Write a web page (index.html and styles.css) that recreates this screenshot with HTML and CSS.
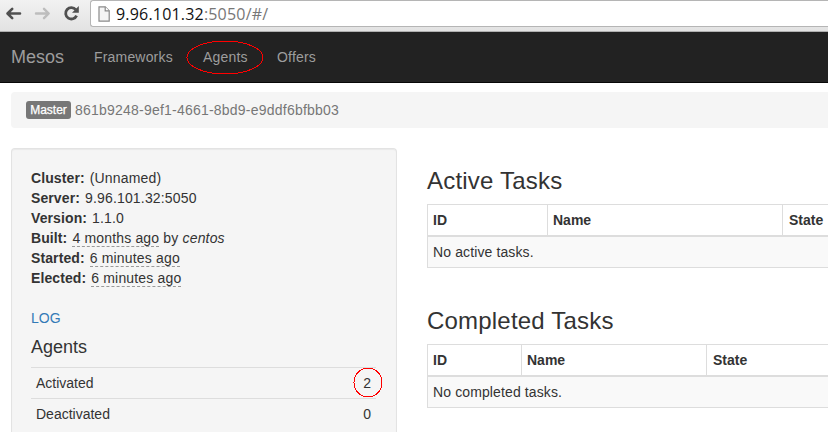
FILE: index.html
```
<!DOCTYPE html>
<html lang="en">
<head>
<meta charset="utf-8">
<title>Mesos</title>
<link rel="stylesheet" href="styles.css">
</head>
<body>
<div class="browser">
  <svg class="controls" width="90" height="30" viewBox="0 0 90 30" fill="none">
    <path d="M8 13.5H20M12.2 8.8L7.5 13.5L12.2 18.2" stroke="#505050" stroke-width="2.6" stroke-linecap="round" stroke-linejoin="round"/>
    <path d="M36 13.5H48.5M44 8.8L48.7 13.5L44 18.2" stroke="#bdbdbd" stroke-width="2.4" stroke-linecap="round" stroke-linejoin="round"/>
    <path d="M75.8 9.7A5.7 5.7 0 1 0 76.6 15.6" stroke="#505050" stroke-width="2.8"/>
    <path d="M78.8 6V12.8H72Z" fill="#505050"/>
  </svg>
  <div class="address">
    <svg class="page-icon" width="12" height="16" viewBox="0 0 12 16">
      <path d="M1 .8H7.2L11.2 4.8V15.2H1Z" fill="#f5f5f5" stroke="#8a8a8a" stroke-width="1.2"/>
      <path d="M7.2 .8V4.8H11.2" fill="#fff" stroke="#8a8a8a" stroke-width="1.2"/>
    </svg>
    <span class="url">9.96.101.32<span class="path">:5050/#/</span></span>
  </div>
</div>
<nav class="navbar">
  <a class="brand">Mesos</a>
  <a class="link frameworks">Frameworks</a>
  <a class="link agents">Agents
    <svg class="mark" width="78" height="35" viewBox="0 0 78 35" shape-rendering="crispEdges"><ellipse cx="39" cy="17.5" rx="38" ry="16.5"/></svg>
  </a>
  <a class="link offers">Offers</a>
</nav>
<div class="breadcrumb"><span class="label">Master</span><span class="master-id">861b9248-9ef1-4661-8bd9-e9ddf6bfbb03</span></div>
<main class="content">
  <aside class="well">
    <dl class="info">
      <div><dt>Cluster:</dt><dd>(Unnamed)</dd></div>
      <div><dt>Server:</dt><dd>9.96.101.32:5050</dd></div>
      <div><dt>Version:</dt><dd>1.1.0</dd></div>
      <div><dt>Built:</dt><dd><time>4 months ago</time> by <i>centos</i></dd></div>
      <div><dt>Started:</dt><dd><time>6 minutes ago</time></dd></div>
      <div><dt>Elected:</dt><dd><time>6 minutes ago</time></dd></div>
    </dl>
    <a class="log">LOG</a>
    <h4>Agents</h4>
    <div class="stat"><span>Activated</span><span class="num">2
      <svg class="mark" width="30" height="31" viewBox="0 0 30 31" shape-rendering="crispEdges"><ellipse cx="15" cy="15.5" rx="14" ry="14.5"/></svg></span></div>
    <div class="stat"><span>Deactivated</span><span class="num">0</span></div>
  </aside>
  <section class="tasks">
    <h3 class="h-active">Active Tasks</h3>
    <div class="table active">
      <div class="head"><b>ID</b><b>Name</b><b>State</b></div>
      <div class="empty">No active tasks.</div>
    </div>
    <h3 class="h-completed">Completed Tasks</h3>
    <div class="table completed">
      <div class="head"><b>ID</b><b>Name</b><b>State</b></div>
      <div class="empty">No completed tasks.</div>
    </div>
  </section>
</main>
</body>
</html>
```
FILE: styles.css
```
* { box-sizing: border-box; }
body {
  margin: 0;
  background: #fff;
  color: #333;
  font: 14px/20px "Liberation Sans", Arial, sans-serif;
}
.browser {
  display: flex;
  height: 32px;
  background: linear-gradient(#f2f2f2, #e2e2e2);
  border-bottom: 1px solid #b0b0b0;
}
.controls { flex: none; }
.address {
  display: flex;
  flex: 1;
  height: 27px;
  padding: 0 7px;
  background: #fff;
  border: 1px solid #b5b5b5;
  border-right: 0;
  border-radius: 3px 0 0 3px;
}
.page-icon { margin: 5px 6px 0 0; }
.url {
  color: #111;
  font: 16px/26px "Open Sans", "Noto Sans", sans-serif;
  letter-spacing: .19px;
}
.path { color: #777; }
.navbar {
  display: flex;
  height: 51px;
  padding: 15px 11px 0;
  background: #222;
  border-bottom: 1px solid #080808;
  color: #9d9d9d;
}
.brand { width: 83px; font-size: 18px; }
.link { position: relative; letter-spacing: .18px; }
.frameworks { width: 109px; }
.agents { width: 74px; }
.mark {
  position: absolute;
  fill: none;
  stroke: #f00;
  stroke-width: 1;
}
.agents .mark { left: -17px; top: -7px; }
.breadcrumb {
  display: flex;
  align-items: center;
  height: 36px;
  margin: 9px 0 20px 11px;
  padding-left: 15px;
  background: #f5f5f5;
  border-radius: 4px 0 0 4px;
  color: #777;
}
.label {
  width: 45px;
  height: 18px;
  margin-right: 4px;
  background: #777;
  border-radius: 3px;
  color: #fff;
  font-size: 12px;
  line-height: 18px;
  text-align: center;
  -webkit-text-stroke: .25px #fff;
}
.master-id { letter-spacing: .22px; }
.content { display: flex; height: 284px; padding-left: 11px; }
.well {
  flex: none;
  width: 386px;
  padding: 19px 20px 0 19px;
  background: #f5f5f5;
  border: 1px solid #e3e3e3;
  border-bottom: 0;
  border-radius: 4px 4px 0 0;
  box-shadow: inset 0 1px 1px rgba(0, 0, 0, .05);
}
.info { margin: 0 0 20px; }
.info div { display: flex; gap: 5px; }
dt { font-weight: bold; letter-spacing: .1px; }
dd { margin: 0; letter-spacing: .17px; }
time { display: inline-block; height: 19px; border-bottom: 1px dashed #999; vertical-align: top; }
.log { display: block; color: #337ab7; }
h4 { margin: 9px 0 10px; font-size: 18px; font-weight: 500; line-height: 20px; }
.stat {
  display: flex;
  justify-content: space-between;
  height: 31px;
  padding: 5px;
  border-top: 1px solid #ddd;
}
.num { position: relative; }
.num .mark { left: -10px; top: -6px; }
.tasks { flex: 1; min-width: 0; padding-left: 30px; }
h3 { margin: 0; font-size: 24px; font-weight: 500; line-height: 26px; letter-spacing: .2px; }
.h-active { padding-top: 20px; margin-bottom: 10px; }
.h-completed { margin: 40px 0 10px; }
.table { border: 1px solid #ddd; border-right: 0; }
.head { display: grid; border-bottom: 2px solid #ddd; }
.active .head { grid-template-columns: 119px 235px 1fr; }
.completed .head { grid-template-columns: 93px 185px 1fr; }
.head b { padding: 5px; }
.head b + b { border-left: 1px solid #ddd; }
.head b:last-child { padding-left: 6px; }
.empty { padding: 5px; background: #f9f9f9; letter-spacing: .12px; }
```
